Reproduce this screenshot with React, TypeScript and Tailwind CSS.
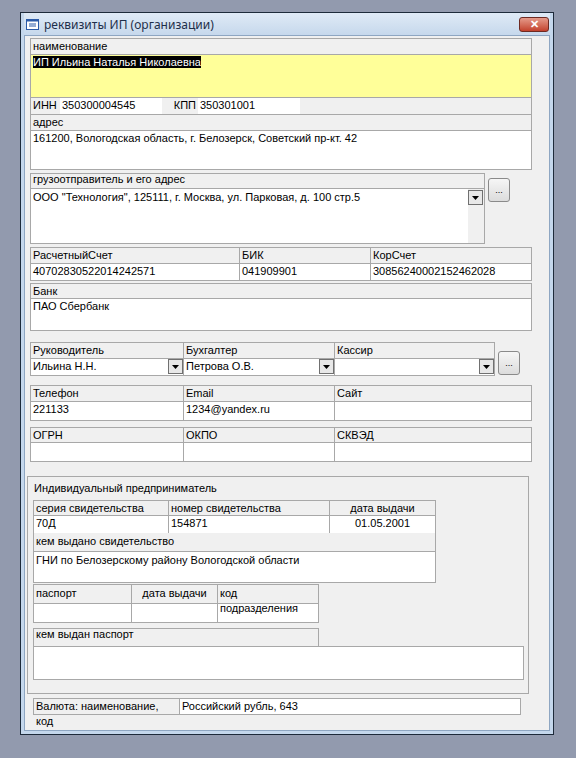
import React from "react";

const B = "border-[#a8a8a8]";

function Arrow() {
  return (
    <div className="w-[15px] h-[15px] bg-[#e8e8e8] border border-[#707070] flex items-center justify-center shrink-0">
      <svg width="7" height="4" viewBox="0 0 7 4"><path d="M0 0h7L3.5 4z" fill="#000" /></svg>
    </div>
  );
}

function Dots({ cls }: { cls: string }) {
  return (
    <div className={`w-[22px] h-[24px] border border-[#8a8a8a] rounded-[3px] bg-gradient-to-b from-[#f6f6f6] to-[#dcdcdc] flex items-center justify-center text-[9px] leading-none ${cls}`}>...</div>
  );
}

function Row3({ cols, labels, values, lh, vh, center }: { cols: string; labels: string[]; values: React.ReactNode[]; lh: string; vh: string; center?: number[] }) {
  return (
    <div className={`border ${B}`}>
      <div className={`grid ${cols} ${lh} border-b ${B}`}>
        {labels.map((l, i) => (
          <div key={i} className={`px-[2px] ${i ? `border-l ${B}` : ""} ${center?.includes(i) ? "text-center" : ""}`}>{l}</div>
        ))}
      </div>
      <div className={`grid ${cols} ${vh} bg-white`}>
        {values.map((v, i) => (
          <div key={i} className={`px-[2px] ${i ? `border-l ${B}` : ""} ${center?.includes(i) ? "text-center" : ""}`}>{v}</div>
        ))}
      </div>
    </div>
  );
}

export default function App() {
  return (
    <div className="w-[576px] h-[758px] bg-[#929aae] pt-[12px] pl-[20px] text-[11px] leading-[15px] text-black" style={{ fontFamily: '"Liberation Sans", Arial, sans-serif' }}>
      <div className="w-[534px] h-[723px] border border-[#1d2a3a] bg-[#c4d7ec] px-[3px] pb-[3px] flex flex-col">
        <div className="h-[22px] flex items-center bg-gradient-to-b from-[#dfeaf6] to-[#c6d8ec] pl-[2px] pr-[1px]">
          <svg width="13" height="11" viewBox="0 0 13 11" className="mr-[5px]">
            <rect x="0.5" y="0.5" width="12" height="10" fill="#fff" stroke="#2a5aa8" />
            <rect x="0.5" y="0.5" width="12" height="2" fill="#2a5aa8" />
            <path d="M3 5h7M3 7h7" stroke="#2a5aa8" />
          </svg>
          <span className="text-[12px] text-[#1e2f4a]" style={{ fontFamily: '"Noto Sans", sans-serif' }}>реквизиты ИП (организации)</span>
          <div className="ml-auto w-[30px] h-[15px] rounded-[3px] border border-[#6e2a22] bg-gradient-to-b from-[#e49a8a] to-[#c2402c] flex items-center justify-center text-white text-[11px] font-bold">✕</div>
        </div>
        <div className="flex-1 bg-[#f0f0f0] border border-[#8ea6c2] pl-[5px] pt-[2px] w-full">
          <div className="w-[502px]">
            {/* наименование */}
            <div className={`border ${B}`}>
              <div className={`h-[16px] px-[2px] border-b ${B}`}>наименование</div>
              <div className="h-[42px] bg-[#ffff99] px-[2px]"><span className="bg-black text-white">ИП Ильина Наталья Николаевна</span></div>
            </div>
            <div className={`flex h-[16px] border-x ${B}`}>
              <div className="w-[29px] px-[2px]">ИНН</div>
              <div className="w-[102px] bg-white px-[2px]">350300004545</div>
              <div className="w-[36px] text-right pr-[2px]">КПП</div>
              <div className="w-[102px] bg-white px-[2px]">350301001</div>
            </div>
            <div className={`border ${B}`}>
              <div className={`h-[16px] px-[2px] border-b ${B}`}>адрес</div>
              <div className="h-[38px] bg-white px-[2px]">161200, Вологодская область, г. Белозерск, Советский пр-кт. 42</div>
            </div>
            {/* грузоотправитель */}
            <div className="flex mt-[3px]">
              <div className={`w-[455px] border ${B}`}>
                <div className={`h-[15px] px-[2px] border-b ${B} leading-[11px] overflow-hidden`}>грузоотправитель и его адрес</div>
                <div className="h-[54px] bg-white flex">
                  <div className="flex-1 px-[2px] pt-[1px]">ООО "Технология", 125111, г. Москва, ул. Парковая, д. 100 стр.5</div>
                  <div className="w-[16px] bg-[#f0f0f0] pt-[1px]"><Arrow /></div>
                </div>
              </div>
              <Dots cls="ml-[3px] mt-[5px]" />
            </div>
            <div className="mt-[3px]">
              <Row3 cols="grid-cols-[208px_131px_1fr]" labels={["РасчетныйСчет", "БИК", "КорСчет"]} values={["40702830522014242571", "041909901", "30856240002152462028"]} lh="h-[16px]" vh="h-[16px]" />
            </div>
            <div className={`border ${B} mt-[2px]`}>
              <div className={`h-[15px] px-[2px] border-b ${B}`}>Банк</div>
              <div className="h-[31px] bg-white px-[2px]">ПАО Сбербанк</div>
            </div>
            {/* руководитель */}
            <div className="flex mt-[11px]">
              <div className={`w-[465px] border ${B}`}>
                <div className={`grid grid-cols-[152px_151px_1fr] h-[16px] border-b ${B}`}>
                  <div className="px-[2px]">Руководитель</div>
                  <div className={`px-[2px] border-l ${B}`}>Бухгалтер</div>
                  <div className={`px-[2px] border-l ${B}`}>Кассир</div>
                </div>
                <div className="grid grid-cols-[152px_151px_1fr] h-[16px]">
                  <div className="bg-white flex justify-between pl-[2px]">Ильина Н.Н.<Arrow /></div>
                  <div className={`bg-white flex justify-between pl-[2px] border-l ${B}`}>Петрова О.В.<Arrow /></div>
                  <div className={`bg-white flex justify-end border-l ${B}`}><Arrow /></div>
                </div>
              </div>
              <Dots cls="ml-[3px] mt-[9px]" />
            </div>
            <div className="mt-[9px]">
              <Row3 cols="grid-cols-[152px_151px_1fr]" labels={["Телефон", "Email", "Сайт"]} values={["221133", "1234@yandex.ru", ""]} lh="h-[16px]" vh="h-[18px]" />
            </div>
            <div className="mt-[6px]">
              <Row3 cols="grid-cols-[152px_151px_1fr]" labels={["ОГРН", "ОКПО", "СКВЭД"]} values={["", "", ""]} lh="h-[15px]" vh="h-[18px]" />
            </div>
          </div>
          {/* group box */}
          <div className={`w-[502px] h-[218px] border ${B} mt-[14px] -ml-[3px] pl-[5px] pt-[4px]`}>
            <div className="ml-[1px] mb-[4px]">Индивидуальный предприниматель</div>
            <div className={`w-[403px] border ${B}`}>
              <div className={`grid grid-cols-[134px_161px_1fr] h-[15px] border-b ${B}`}>
                <div className="px-[2px]">серия свидетельства</div>
                <div className={`px-[2px] border-l ${B}`}>номер свидетельства</div>
                <div className={`text-center border-l ${B}`}>дата выдачи</div>
              </div>
              <div className={`grid grid-cols-[134px_161px_1fr] h-[17px] bg-white`}>
                <div className="px-[2px]">70Д</div>
                <div className={`px-[2px] border-l ${B}`}>154871</div>
                <div className={`text-center border-l ${B}`}>01.05.2001</div>
              </div>
              <div className={`h-[19px] px-[2px] border-b ${B} pt-[1px]`}>кем выдано свидетельство</div>
              <div className="h-[30px] bg-white px-[2px] pt-[1px]">ГНИ по Белозерскому району Вологодской области</div>
            </div>
            <div className={`w-[286px] border ${B} mt-[1px]`}>
              <div className={`grid grid-cols-[97px_86px_1fr] h-[19px] border-b ${B}`}>
                <div className="px-[2px] pt-[1px]">паспорт</div>
                <div className={`text-center border-l ${B} pt-[1px]`}>дата выдачи</div>
                <div className={`px-[2px] border-l ${B} pt-[1px]`}>код подразделения</div>
              </div>
              <div className="grid grid-cols-[97px_86px_1fr] h-[18px] bg-white">
                <div />
                <div className={`border-l ${B}`} />
                <div className={`border-l ${B}`} />
              </div>
            </div>
            <div className={`w-[286px] h-[18px] border ${B} border-b-0 mt-[5px] px-[2px] leading-[11px] overflow-hidden`}>кем выдан паспорт</div>
            <div className={`w-[491px] h-[34px] border ${B} bg-white`} />
          </div>
          <div className={`ml-[3px] mt-[4px] w-[488px] h-[17px] border ${B} flex`}>
            <div className={`w-[146px] px-[2px] border-r ${B}`}>Валюта: наименование, код</div>
            <div className="flex-1 bg-white px-[2px]">Российский рубль, 643</div>
          </div>
        </div>
      </div>
    </div>
  );
}
